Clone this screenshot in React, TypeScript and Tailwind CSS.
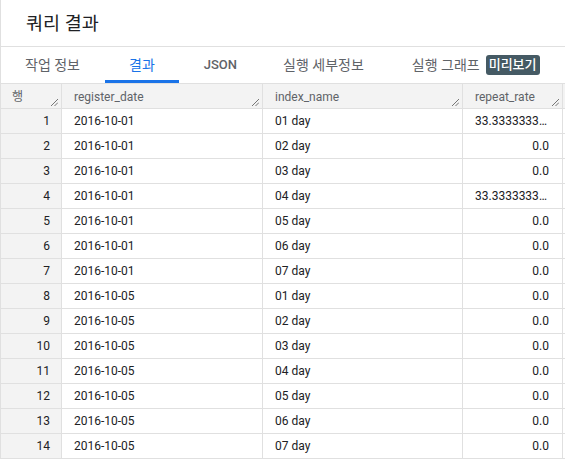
import React from "react";

const rows = [
  ["2016-10-01", "01 day", "33.33333333333333"],
  ["2016-10-01", "02 day", "0.0"],
  ["2016-10-01", "03 day", "0.0"],
  ["2016-10-01", "04 day", "33.33333333333333"],
  ["2016-10-01", "05 day", "0.0"],
  ["2016-10-01", "06 day", "0.0"],
  ["2016-10-01", "07 day", "0.0"],
  ["2016-10-05", "01 day", "0.0"],
  ["2016-10-05", "02 day", "0.0"],
  ["2016-10-05", "03 day", "0.0"],
  ["2016-10-05", "04 day", "0.0"],
  ["2016-10-05", "05 day", "0.0"],
  ["2016-10-05", "06 day", "0.0"],
  ["2016-10-05", "07 day", "0.0"],
];

function Handle() {
  return (
    <svg
      className="absolute right-[3px] bottom-[2px]"
      width="8"
      height="8"
      viewBox="0 0 8 8"
    >
      <line x1="1" y1="8" x2="8" y2="1" stroke="#757575" strokeWidth="1" />
      <line x1="4.5" y1="8" x2="8" y2="4.5" stroke="#757575" strokeWidth="1" />
    </svg>
  );
}

export default function App() {
  return (
    <div
      className="w-[565px] h-[459px] overflow-hidden bg-white border-l border-[#e0e0e0] text-[#202124]"
      style={{ fontFamily: "Roboto, 'Noto Sans CJK KR', sans-serif" }}
    >
      <div className="h-[47px] border-b border-[#e0e0e0] flex items-center pl-[25px] pt-[2px]">
        <span className="text-[18.5px] leading-none whitespace-nowrap">쿼리 결과</span>
      </div>
      <div className="h-[36px] flex gap-[1px] text-[14px] text-[#5f6368] whitespace-nowrap">
        <div className="shrink-0 px-[24px] flex items-center">작업 정보</div>
        <div className="shrink-0 px-[24px] flex items-center relative text-[#1a73e8]">
          결과
          <div className="absolute left-0 right-0 bottom-0 h-[3px] bg-[#1a73e8]" />
        </div>
        <div className="shrink-0 pl-[24px] pr-[22px] flex items-center font-medium text-[13px]">JSON</div>
        <div className="shrink-0 pl-[23px] pr-[23px] flex items-center">실행 세부정보</div>
        <div className="shrink-0 px-[24px] flex items-center gap-[6px]">
          실행 그래프
          <span className="bg-[#455a64] text-white text-[13px] font-medium rounded-[3px] px-[3px] h-[20px] flex items-center">
            미리보기
          </span>
        </div>
      </div>
      <div className="text-[12px]">
        <div className="flex h-[26px] bg-[#f3f3f3] border-t border-b border-[#e0e0e0] text-[#5f6368]">
          <div className="w-[61px] shrink-0 border-r border-[#e0e0e0] relative pl-[11px] pt-[4px]">
            행
            <Handle />
          </div>
          <div className="w-[201px] shrink-0 border-r border-[#e0e0e0] relative pl-[12px] pt-[4px]">
            register_date
            <Handle />
          </div>
          <div className="w-[200px] shrink-0 border-r border-[#e0e0e0] relative pl-[12px] pt-[4px]">
            index_name
            <Handle />
          </div>
          <div className="w-[100px] shrink-0 border-r border-[#e0e0e0] relative pl-[12px] pt-[4px]">
            repeat_rate
            <Handle />
          </div>
          <div className="flex-1" />
        </div>
        {rows.map((r, i) => (
          <div key={i} className="flex h-[25px] border-b border-[#e0e0e0]">
            <div className="w-[61px] shrink-0 bg-[#f3f3f3] border-r border-[#e0e0e0] flex items-center justify-end pr-[11px]">
              {i + 1}
            </div>
            <div className="w-[201px] shrink-0 border-r border-[#e0e0e0] flex items-center pl-[12px]">
              {r[0]}
            </div>
            <div className="w-[200px] shrink-0 border-r border-[#e0e0e0] flex items-center pl-[12px]">
              {r[1]}
            </div>
            <div className="w-[100px] shrink-0 border-r border-[#e0e0e0] pl-[12px] pr-[13px] leading-[24px] text-right truncate">
              {r[2]}
            </div>
            <div className="flex-1" />
          </div>
        ))}
      </div>
    </div>
  );
}
